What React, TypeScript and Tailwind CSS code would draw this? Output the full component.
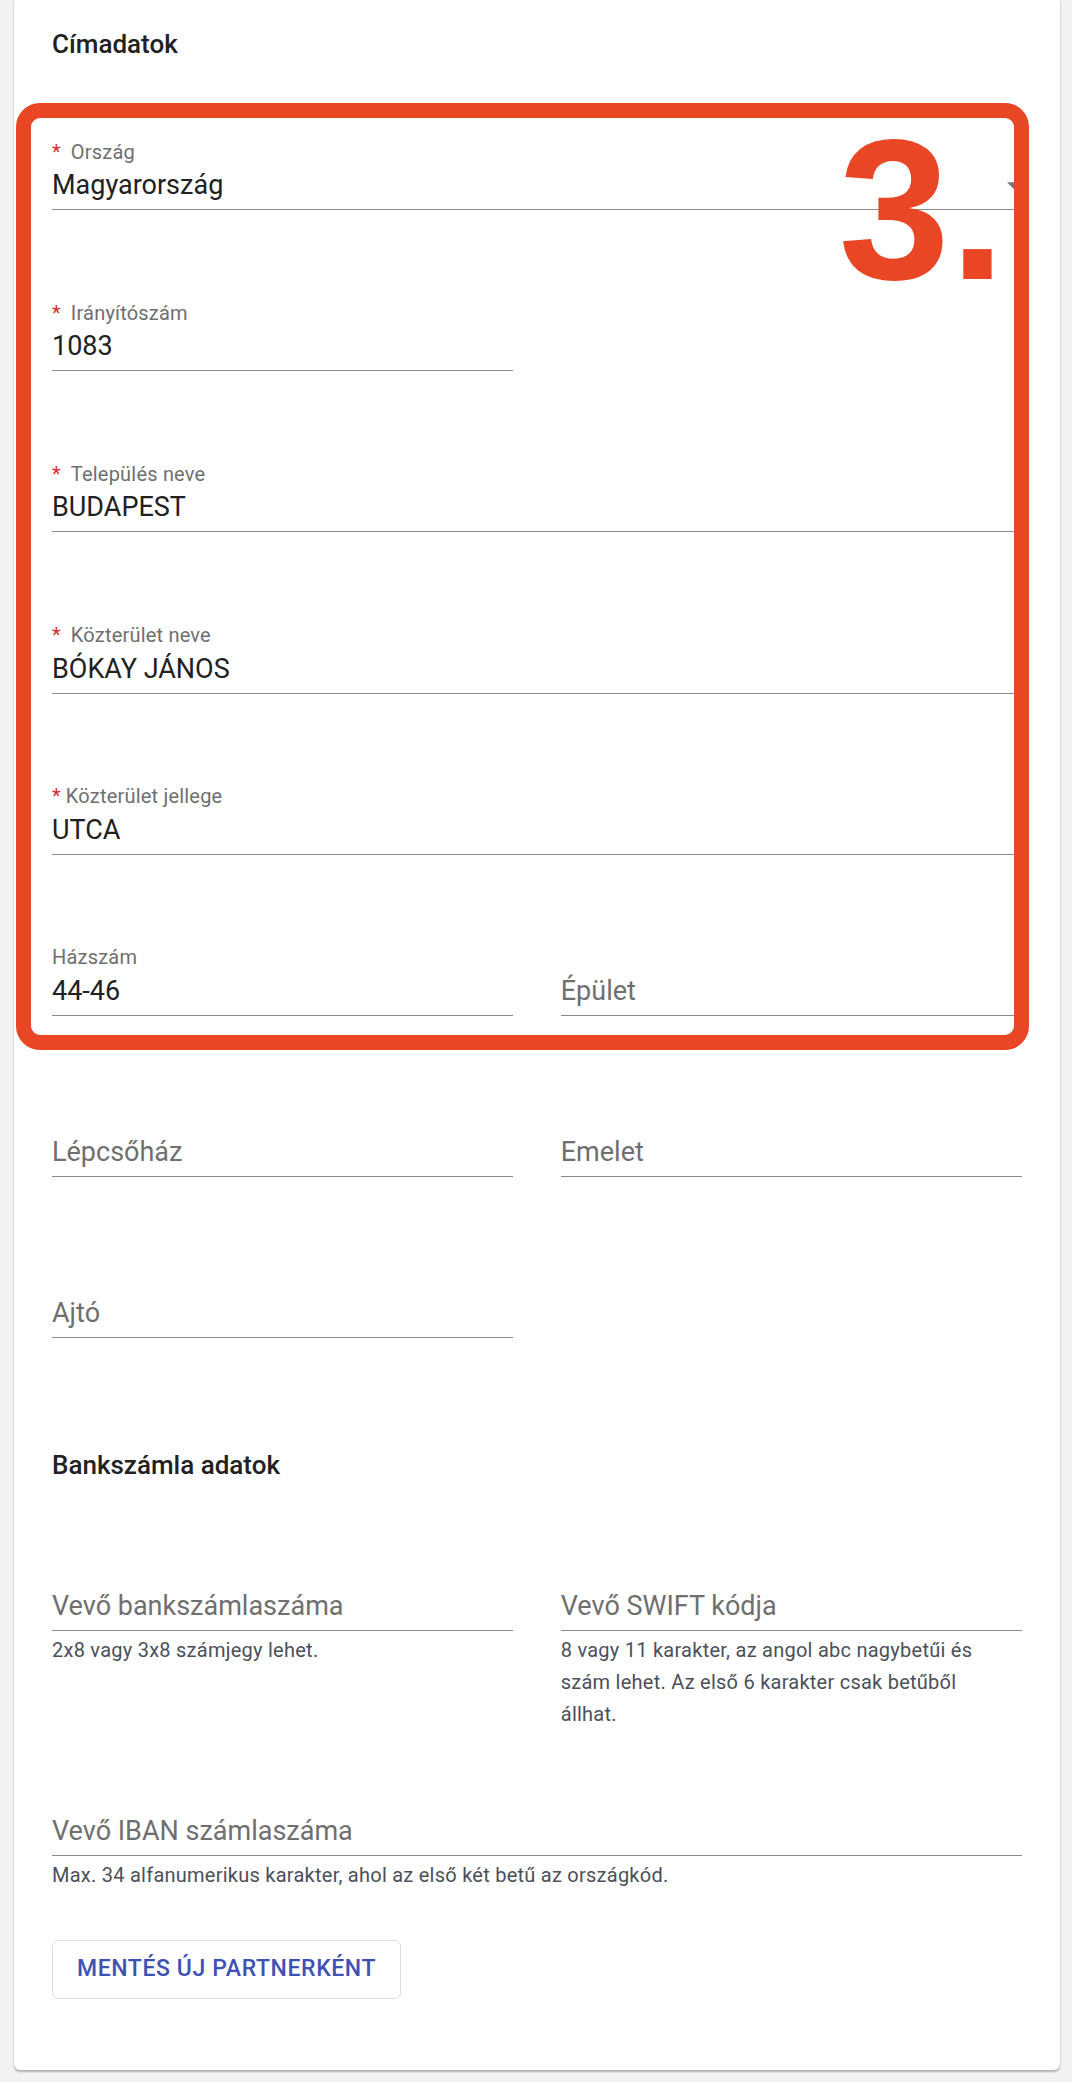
import React from "react";

type FieldProps = {
  label: string;
  value?: string;
  req?: "wide" | "tight";
  helper?: React.ReactNode;
  select?: boolean;
};

// underline text field, label shrinks above when there is a value
const Field = ({ label, value, req, helper, select }: FieldProps) => {
  const filled = value !== undefined;
  return (
    <div>
      <div className="h-[20px] whitespace-nowrap text-[20px] leading-[20px] tracking-[0.2px] text-[#6f6f6f]">
        {filled && (
          <>
            {req && (
              <span className={req === "wide" ? "mr-[10px] text-[#d32f2f]" : "mr-[5px] text-[#d32f2f]"}>*</span>
            )}
            {label}
          </>
        )}
      </div>
      <div className="relative flex h-[48.5px] items-end border-b-[1.5px] border-[#8c8c8c] pb-[8px]">
        {filled ? (
          <span className="text-[27px] leading-[32px] text-[#212121]">{value}</span>
        ) : (
          <span className="text-[27px] leading-[32px] text-[#6f6f6f]">{label}</span>
        )}
        {select && (
          <svg className="absolute right-[-2px] top-[20px]" width="17" height="9" viewBox="0 0 10 5">
            <path d="M0 0l5 5 5-5z" fill="#757575" />
          </svg>
        )}
      </div>
      {helper && (
        <div className="mt-[3px] text-[20px] leading-[32px] tracking-[0.25px] text-[#4b505a]">{helper}</div>
      )}
    </div>
  );
};

const App = () => {
  return (
    <div className="min-h-[2082px] bg-[#f2f2f2] pb-[12px] pl-[13.5px] pr-[12px] font-['Roboto',sans-serif]">
      <div className="relative rounded-b-[6px] bg-white px-[38.5px] pb-[71px] pt-[28px] shadow-[0_2px_2px_rgba(0,0,0,0.25),0_0_2px_rgba(0,0,0,0.12)]">
        <h2 className="text-[26px] font-medium leading-[32px] text-[#212121]">Címadatok</h2>

        {/* Címadatok */}
        <div className="mt-[81.5px] flex flex-col gap-[92.7px]">
          <Field label="Ország" value="Magyarország" req="wide" select />
          <div className="grid grid-cols-2 gap-x-[48px]">
            <Field label="Irányítószám" value="1083" req="wide" />
          </div>
          <Field label="Település neve" value="BUDAPEST" req="wide" />
          <Field label="Közterület neve" value="BÓKAY JÁNOS" req="wide" />
          <Field label="Közterület jellege" value="UTCA" req="tight" />
          <div className="grid grid-cols-2 gap-x-[48px]">
            <Field label="Házszám" value="44-46" />
            <Field label="Épület" />
          </div>
          <div className="grid grid-cols-2 gap-x-[48px]">
            <Field label="Lépcsőház" />
            <Field label="Emelet" />
          </div>
          <div className="grid grid-cols-2 gap-x-[48px]">
            <Field label="Ajtó" />
          </div>
        </div>

        <h2 className="mt-[110.6px] text-[26px] font-medium leading-[32px] text-[#212121]">Bankszámla adatok</h2>

        {/* Bankszámla */}
        <div className="mt-[81.5px] grid grid-cols-2 gap-x-[48px]">
          <Field label="Vevő bankszámlaszáma" helper="2x8 vagy 3x8 számjegy lehet." />
          <Field
            label="Vevő SWIFT kódja"
            helper={
              <>
                8 vagy 11 karakter, az angol abc nagybetűi és
                <br />
                szám lehet. Az első 6 karakter csak betűből
                <br />
                állhat.
              </>
            }
          />
        </div>
        <div className="mt-[58px]">
          <Field
            label="Vevő IBAN számlaszáma"
            helper="Max. 34 alfanumerikus karakter, ahol az első két betű az országkód."
          />
        </div>

        <button className="mt-[49px] flex h-[58.5px] w-[349px] items-center justify-center rounded-[6px] border border-[#dedede] bg-white text-[23px] font-medium uppercase tracking-[0.6px] text-[#3f51b5]">
          Mentés új partnerként
        </button>

        {/* annotation overlay */}
        <div className="pointer-events-none absolute left-[2px] top-[103px] h-[947px] w-[1013px] rounded-[24px] border-[15px] border-[#e94626]" />
        <div className="pointer-events-none absolute left-[825px] top-[110px] font-['Liberation_Sans',Arial,sans-serif] text-[200px] font-bold leading-[200px] text-[#e94626]">
          3.
        </div>
      </div>
    </div>
  );
};

export default App;
